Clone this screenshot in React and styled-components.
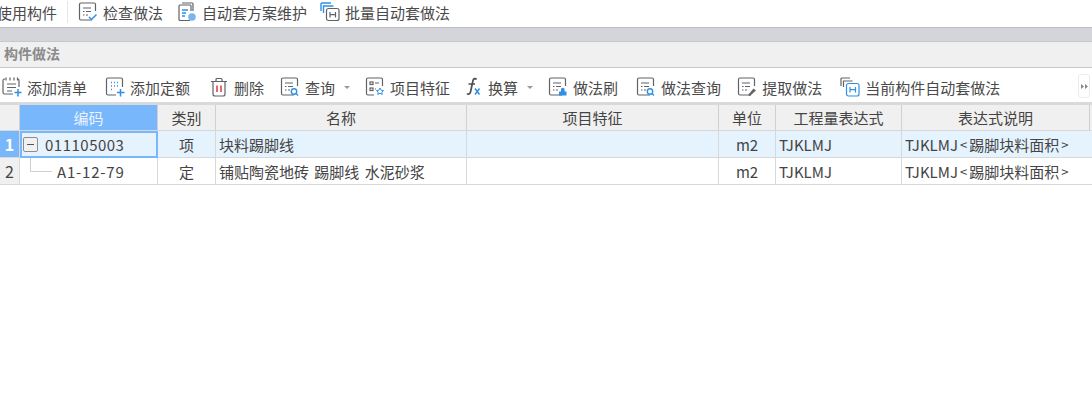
import React from "react";
import styled, { createGlobalStyle } from "styled-components";

const Global = createGlobalStyle`
  html, body { margin: 0; padding: 0; background: #fff; overflow: hidden; }
  body { font-family: "Noto Sans CJK SC", "Noto Sans", sans-serif; color: #444; }
`;
const Page = styled.div`width: 1092px; height: 415px; overflow: hidden; display: flex; flex-direction: column; background: #fff;`;
const TopBar = styled.div`height: 27px; box-sizing: border-box; padding-bottom: 3px; display: flex; align-items: center; font-size: 15px; color: #4a4a4a; flex: none; overflow: hidden;`;
const Clipped = styled.span`margin-left: -3px; width: 60px; white-space: nowrap; flex: none; margin-right: 10px;`;
const Sep = styled.div`width: 1px; height: 22px; background: #e6e6e6; flex: none; margin-right: 10px;`;
const TopItem = styled.div`display: flex; align-items: center; gap: 5px; margin-right: ${p => p.$mr}px; white-space: nowrap;`;
const Band = styled.div`height: 14px; flex: none; box-sizing: border-box; background: #d3d5da; border-top: 1px solid #bfc1c5;`;
const Section = styled.div`height: 27px; flex: none; box-sizing: border-box; background: #f0f0f0; border-top: 1px solid #c8c8c8; border-bottom: 1px solid #c8c8c8; padding: 0 0 4px 4px; display: flex; align-items: center; font-size: 14px; font-weight: 700; color: #8a8a8a;`;
const Tools = styled.div`height: 37px; flex: none; box-sizing: border-box; display: flex; align-items: center; padding: 4px 0 0 2px; position: relative; font-size: 15px; color: #4a4a4a; border-bottom: 3px solid #d9d9d9;`;
const Tool = styled.div`display: flex; align-items: center; gap: 5px; white-space: nowrap; margin-right: ${p => p.$mr}px;`;
const Caret = styled.span`width: 0; height: 0; border-left: 3px solid transparent; border-right: 3px solid transparent; border-top: 3px solid #999; margin: 1px 0 0 4px;`;
const More = styled.div`position: absolute; right: 2px; top: 6px; width: 12px; height: 24px; box-sizing: border-box; border: 1px solid #ececec; border-radius: 3px; display: flex; align-items: center; justify-content: center;`;
const COLS = "20px 138px 58px 251px 252px 57px 126px 188px 2px";
const Row = styled.div`display: grid; grid-template-columns: ${COLS}; height: ${p => p.$h}px; flex: none; background: ${p => p.$bg}; border-bottom: 1px solid #d8d8d8; box-sizing: border-box;`;
const Cell = styled.div`
  display: flex; align-items: center; box-sizing: border-box; position: relative; white-space: nowrap;
  font-size: 15px; color: #444; border-right: ${p => (p.$open ? "0" : "1px solid #d8d8d8")}; padding-left: ${p => p.$pad || 0}px;
  justify-content: ${p => (p.$center ? "center" : "flex-start")};
`;
const HeadCell = styled(Cell)`background: ${p => (p.$active ? "#78b7fb" : "#f0f0f0")}; color: ${p => (p.$active ? "#e8f3ff" : "#444")}; border-right-color: #d0d0d0;`;
const RowNo = styled(Cell)`background: ${p => (p.$active ? "#78b7fb" : "#f0f0f0")}; color: ${p => (p.$active ? "#fff" : "#444")}; font-weight: ${p => (p.$active ? 700 : 400)}; justify-content: center; font-size: 16px;`;
const Selected = styled.div`position: absolute; inset: 0 -1px -1px 0; border: 2px solid #78b7fb; pointer-events: none;`;
const Expand = styled.span`width: 15px; height: 15px; box-sizing: border-box; border: 1px solid #8d8d8d; border-radius: 2px; background: #f1f1f1; display: flex; align-items: center; justify-content: center; margin-right: 7px; flex: none;`;
const Minus = styled.span`width: 7px; height: 1px; background: #555;`;
const Code = styled.span`letter-spacing: .5px;`;
const TreeLine = styled.span`position: absolute; left: 10px; top: 0; width: 22px; height: 14px; box-sizing: border-box; border-left: 1px solid #cfcfcf; border-bottom: 1px solid #cfcfcf;`;
const Sub = styled.span`margin-left: 37px; letter-spacing: .8px;`;
const Name = styled.span`word-spacing: 2px;`;
const Angle = styled.span`font-size: 13px; margin: 0 2px;`;

const G = "#5f6368", B = "#2f8fe6";
const Ic = ({ children }) => (
  <svg width="20" height="20" viewBox="0 0 20 20" fill="none" stroke={G} strokeWidth="1.2" style={{ flex: "none" }}>{children}</svg>
);
const Doc = () => <path d="M14 18H3a1.500 1.500 0 0 1-1.500-1.500v-14A1.500 1.500 0 0 1 3 1h13a1.500 1.500 0 0 1 1.500 1.500V9" />;
const Lines = () => <path d="M5 6h8M5 9.500h1.500M8 9.500h5M5 13h1.500M8 13h2" />;
const Magnify = () => <g stroke={B} strokeWidth="1.400"><circle cx="14" cy="14.500" r="2.700" /><path d="M16 16.500l2 2" /></g>;
const IconCheck = () => <Ic><Doc /><Lines /><path d="M11 15l2.500 2.500 5-5" stroke={B} strokeWidth="1.500" /></Ic>;
const IconPlan = () => <Ic><path d="M5 1h10a1 1 0 0 1 1 1v7M13 18.500H3a1 1 0 0 1-1-1V4a1 1 0 0 1 1-1h10a1 1 0 0 1 1 1v5" /><path d="M5 8h6M5 11h4M5 14h3" stroke={B} strokeWidth="1.400" /><circle cx="15" cy="15" r="3.800" fill="#7ab6ee" stroke="none" /></Ic>;
const IconBatch = () => <Ic><path d="M1 9V2a1 1 0 0 1 1-1h9M3.500 11V4h10" stroke={B} strokeWidth="1.400" /><rect x="6.500" y="6.500" width="12.500" height="12" rx="2" /><path d="M10 10v5.500M15.500 10v5.500M10 12.700h5.500" /></Ic>;
const IconAddList = () => <Ic><path d="M4 .5v3M8 .5v3M12 .5v3M15.500 .5v3" /><path d="M3 2H2.500A1.500 1.500 0 0 0 1 3.500v12A1.500 1.500 0 0 0 2.500 17H11M17 10V3.500A1.500 1.500 0 0 0 15.500 2" /><path d="M5 7h9M5 10.500h9M5 14h5" /><path d="M16 12v7.500M12.500 15.500h7" stroke={B} strokeWidth="1.500" /></Ic>;
const IconAddQuota = () => <Ic><path d="M11 18H3a1.500 1.500 0 0 1-1.500-1.500v-14A1.500 1.500 0 0 1 3 1h13a1.500 1.500 0 0 1 1.500 1.500V10" /><path d="M6 5.500h1M9 5.500h1M12 5.500h1M6 9h1M9 9h1M12 9h1M6 12.500h1" strokeWidth="1.400" stroke={B} /><path d="M15.500 12v7.500M12 15.500h7.500" stroke={B} strokeWidth="1.500" /></Ic>;
const IconDelete = () => <Ic><path d="M2 4.500h16M7 4.500v-2a1 1 0 0 1 1-1h4a1 1 0 0 1 1 1v2" /><path d="M4 4.500v12.500a2 2 0 0 0 2 2h8a2 2 0 0 0 2-2V4.500" /><path d="M8 8.500v6.500M12 8.500v6.500" stroke="#e0393e" strokeWidth="1.500" /></Ic>;
const IconQuery = () => <Ic><Doc /><Lines /><Magnify /></Ic>;
const IconFeature = () => <Ic><path d="M9 18H3a1.500 1.500 0 0 1-1.500-1.500v-14A1.500 1.500 0 0 1 3 1h13a1.500 1.500 0 0 1 1.500 1.500V9" /><rect x="5" y="5" width="3" height="2.500" /><rect x="5" y="11" width="3" height="2.500" /><path d="M10 6h4M10 12h1" /><path d="M15 11l1.200 2.300 2.300.3-1.700 1.600.5 2.300-2.300-1.200-2.300 1.200.5-2.300-1.700-1.600 2.300-.3z" stroke={B} strokeWidth="1" /></Ic>;
const IconFx = () => (
  <svg width="20" height="22" viewBox="0 0 20 22" style={{ flex: "none", overflow: "visible" }}>
    <path d="M13.500 3.500c-1-1.500-3-1-3.500 1L7.500 16c-.4 2-2.300 2.800-3.500 1.500M5.500 8h6.500" fill="none" stroke="#4d4d4d" strokeWidth="1.700" />
    <path d="M12 12.500l4.500 6M16.500 12.500l-4.500 6" fill="none" stroke={B} strokeWidth="1.500" />
  </svg>
);
const IconBrush = () => <Ic><Doc /><Lines /><path d="M13 14.500v-2a1.800 1.800 0 0 1 3.600 0v2H18.500v4h-7.500v-4z" fill={B} stroke="none" /></Ic>;
const IconExtract = () => <Ic><Doc /><Lines /><path d="M11 18l5.500-6.500 2.500 2-6 5.500z" fill="#666" stroke="none" /></Ic>;
const IconCurrent = () => <Ic><path d="M1 9V2a1 1 0 0 1 1-1h8M3.500 10V4h9" /><rect x="6.500" y="6.500" width="12.500" height="12.500" rx="2" stroke={B} /><path d="M10 10v5.500M15.500 10v5.500M10 12.700h5.500" stroke={B} /></Ic>;

const H = ({ children, active }) => <HeadCell $center $active={active}>{children}</HeadCell>;

export default function App() {
  return (
    <Page>
      <Global />
      <TopBar>
        <Clipped>使用构件</Clipped>
        <Sep />
        <TopItem $mr={14}><IconCheck />检查做法</TopItem>
        <TopItem $mr={13}><IconPlan />自动套方案维护</TopItem>
        <TopItem $mr={0}><IconBatch />批量自动套做法</TopItem>
      </TopBar>
      <Band />
      <Section>构件做法</Section>
      <Tools>
        <Tool $mr={18}><IconAddList />添加清单</Tool>
        <Tool $mr={19}><IconAddQuota />添加定额</Tool>
        <Tool $mr={16}><IconDelete />删除</Tool>
        <Tool $mr={15}><IconQuery />查询<Caret /></Tool>
        <Tool $mr={13}><IconFeature />项目特征</Tool>
        <Tool $mr={15}><IconFx />换算<Caret /></Tool>
        <Tool $mr={18}><IconBrush />做法刷</Tool>
        <Tool $mr={16}><IconQuery />做法查询</Tool>
        <Tool $mr={18}><IconExtract />提取做法</Tool>
        <Tool $mr={0}><IconCurrent />当前构件自动套做法</Tool>
        <More>
          <svg width="7" height="7" viewBox="0 0 7 7" fill="#888"><path d="M0 1l3 2.500L0 6zM4 1l3 2.500L4 6z" /></svg>
        </More>
      </Tools>
      <Row $h={26} $bg="#f0f0f0">
        <HeadCell />
        <H active>编码</H>
        <H>类别</H><H>名称</H><H>项目特征</H><H>单位</H><H>工程量表达式</H><H>表达式说明</H>
      </Row>
      <Row $h={27} $bg="#e5f3fe">
        <RowNo $active>1</RowNo>
        <Cell $pad={3}>
          <Expand><Minus /></Expand><Code>011105003</Code>
          <Selected />
        </Cell>
        <Cell $center>项</Cell>
        <Cell $pad={3}>块料踢脚线</Cell>
        <Cell />
        <Cell $center>m2</Cell>
        <Cell $pad={3}>TJKLMJ</Cell>
        <Cell $pad={3} $open>TJKLMJ<Angle>&lt;</Angle>踢脚块料面积<Angle>&gt;</Angle></Cell>
      </Row>
      <Row $h={27} $bg="#fff">
        <RowNo>2</RowNo>
        <Cell><TreeLine /><Sub>A1-12-79</Sub></Cell>
        <Cell $center>定</Cell>
        <Cell $pad={3}><Name>铺贴陶瓷地砖 踢脚线 水泥砂浆</Name></Cell>
        <Cell />
        <Cell $center>m2</Cell>
        <Cell $pad={3}>TJKLMJ</Cell>
        <Cell $pad={3} $open>TJKLMJ<Angle>&lt;</Angle>踢脚块料面积<Angle>&gt;</Angle></Cell>
      </Row>
    </Page>
  );
}
